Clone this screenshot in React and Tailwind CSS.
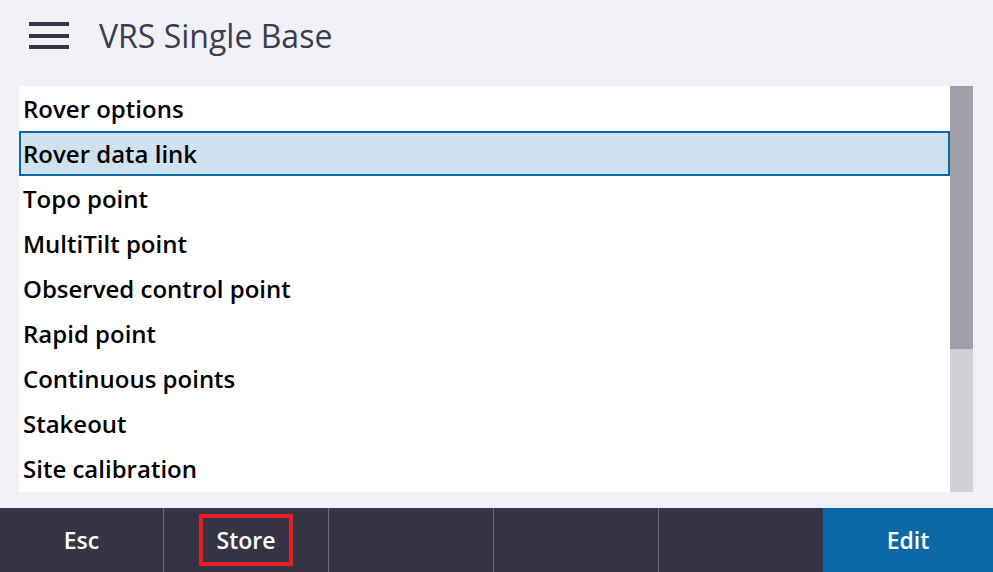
import React from 'react';

const items = [
    'Rover options',
    'Rover data link',
    'Topo point',
    'MultiTilt point',
    'Observed control point',
    'Rapid point',
    'Continuous points',
    'Stakeout',
    'Site calibration',
];

const App = () => {
    const selected = 1;

    return (
        <div className="w-[993px] h-[572px] flex flex-col bg-[#f1f1f5] overflow-hidden" style={{ fontFamily: '"Open Sans", "Noto Sans", sans-serif' }}>
            {/* header */}
            <div className="h-[86px] flex items-start pt-[22px]">
                <div className="ml-[29px] w-[40px] flex flex-col gap-[7.5px]">
                    <div className="h-[4px] bg-[#363546]" />
                    <div className="h-[4px] bg-[#363546]" />
                    <div className="h-[4px] bg-[#363546]" />
                </div>
                <h1 className="ml-[30px] -mt-[8px] text-[32px] leading-[44px] text-[#3c3c50]">VRS Single Base</h1>
            </div>

            {/* list */}
            <div className="mx-[19px] mr-[20px] h-[406px] flex">
                <div className="flex-1 bg-white">
                    {items.map((item, i) => (
                        <div
                            key={item}
                            className={
                                i === selected
                                    ? 'h-[45px] flex items-center pl-[2px] border-2 border-[#0c69a8] bg-[#cfe0ee] text-[24px] font-semibold text-black'
                                    : 'h-[45px] flex items-center pl-[4px] text-[24px] font-semibold text-black'
                            }
                        >
                            {item}
                        </div>
                    ))}
                </div>
                <div className="w-[23px] flex flex-col bg-[#d0d0d6]">
                    <div className="h-[263px] bg-[#a0a0a8]" />
                </div>
            </div>

            {/* footer */}
            <div className="mt-auto h-[64px] flex bg-[#363546] text-white text-[23px] font-semibold">
                <div className="w-[163px] flex items-center justify-center pt-[1px]">Esc</div>
                <div className="w-[165px] flex items-center justify-center border-l border-[#6b6a78]">
                    <span className="px-[14px] pt-[1px] h-[52px] flex items-center border-[4px] border-[#e81c24]">Store</span>
                </div>
                <div className="w-[165px] border-l border-[#6b6a78]" />
                <div className="w-[165px] border-l border-[#6b6a78]" />
                <div className="w-[165px] border-l border-[#6b6a78]" />
                <div className="flex-1 flex items-center justify-center pt-[1px] bg-[#0c69a8]">Edit</div>
            </div>
        </div>
    );
};

export default App;
